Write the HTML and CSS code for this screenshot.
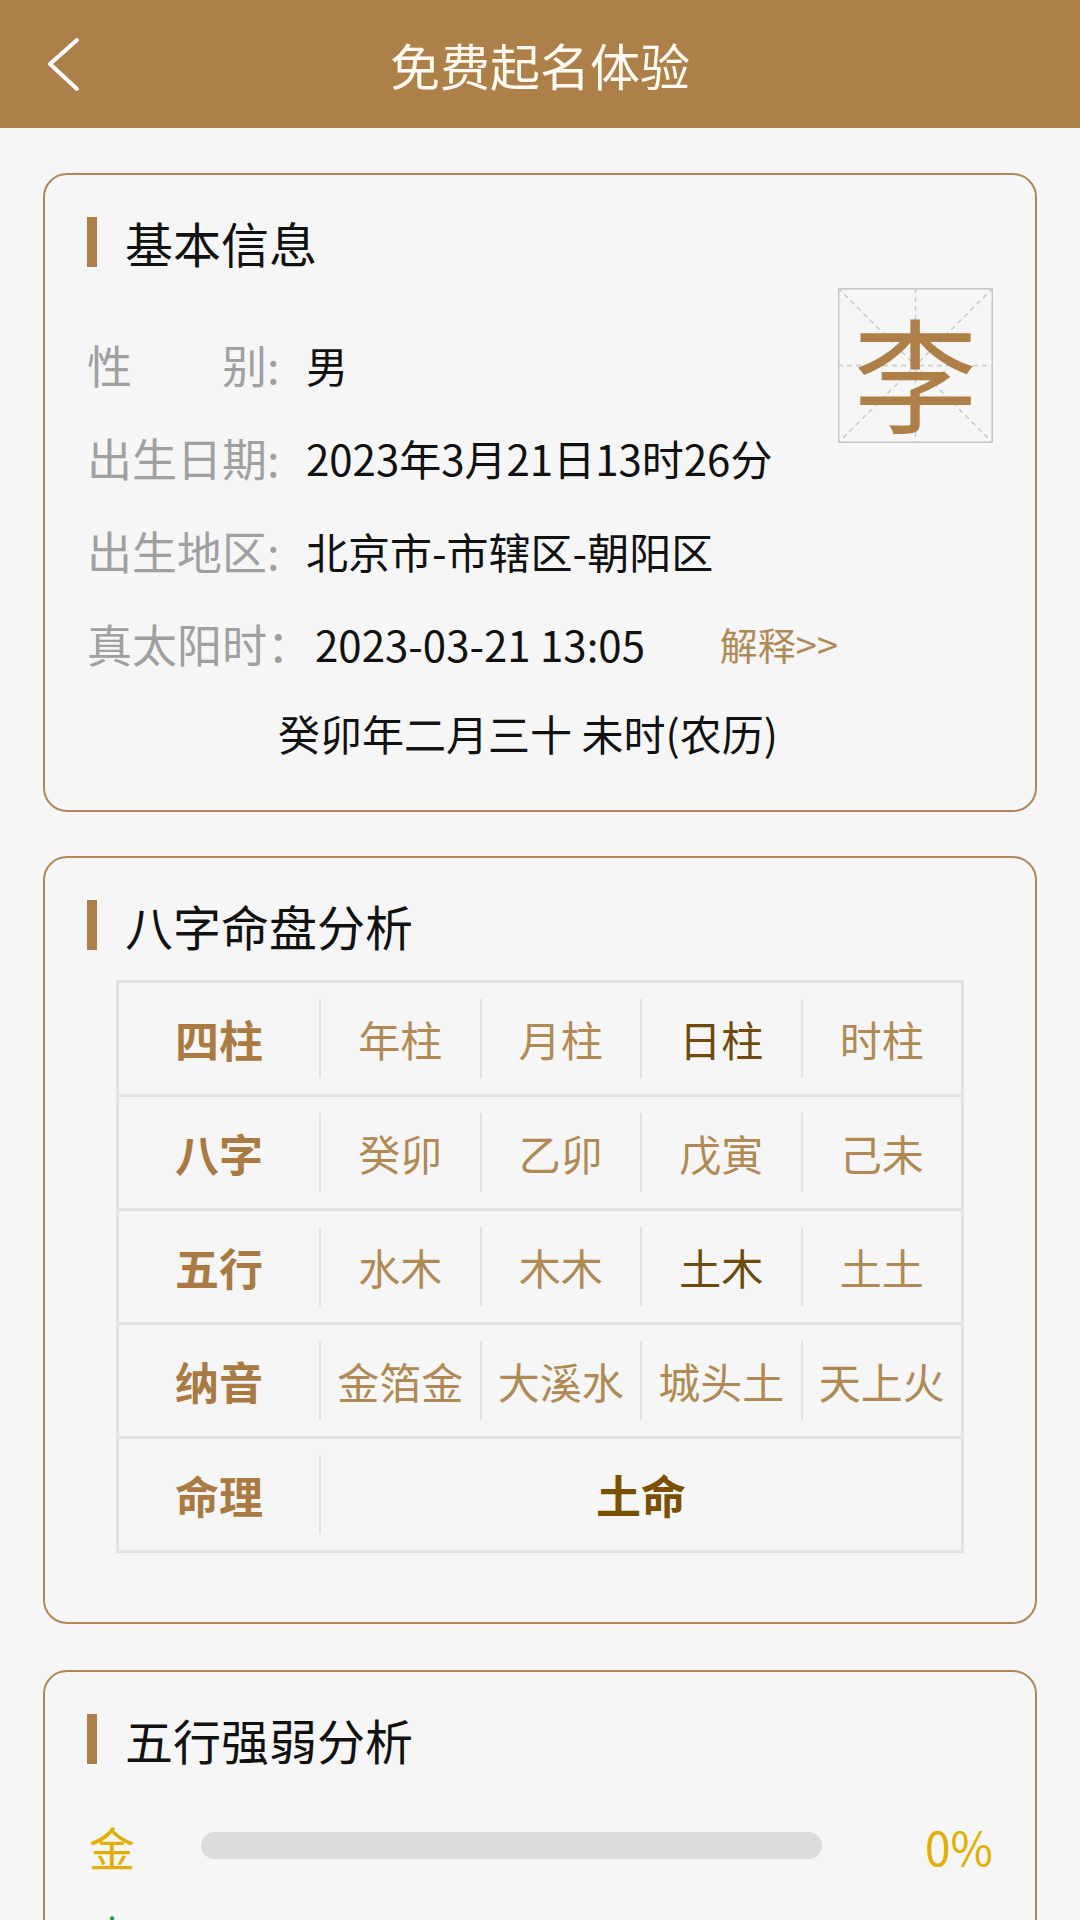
FILE: index.html
```html
<!DOCTYPE html>
<html lang="zh-CN">
<head>
<meta charset="utf-8">
<title>免费起名体验</title>
<link rel="stylesheet" href="styles.css">
</head>
<body>
<header class="topbar">
  <div class="back">
    <svg width="40" height="60" viewBox="0 0 40 60"><polyline points="33,6 6,30 33,55" fill="none" stroke="#ffffff" stroke-width="4" stroke-linecap="round" stroke-linejoin="round"/></svg>
  </div>
  <h1 class="title">免费起名体验</h1>
  <div></div>
</header>
<main class="page">
  <section class="card card-basic">
    <h2 class="sec-title"><span class="sec-bar"></span>基本信息</h2>
    <div class="basic-body">
      <div class="info">
        <div class="row"><span class="lbl"><span class="lbl-t just">性别</span>:</span><span class="val">男</span></div>
        <div class="row"><span class="lbl"><span class="lbl-t">出生日期</span>:</span><span class="val">2023年3月21日13时26分</span></div>
        <div class="row"><span class="lbl"><span class="lbl-t">出生地区</span>:</span><span class="val">北京市-市辖区-朝阳区</span></div>
        <div class="row"><span class="lbl-full">真太阳时：</span><span class="val">2023-03-21 13:05</span><span class="explain">解释&gt;&gt;</span></div>
      </div>
      <div class="namebox">
        <svg class="mi" width="155" height="155" viewBox="0 0 155 155">
          <rect x="0.75" y="0.75" width="153.5" height="153.5" fill="none" stroke="#c6c6c6" stroke-width="1.5"/>
          <g stroke="#cacaca" stroke-width="1.5" stroke-dasharray="5 4" fill="none">
            <line x1="77.5" y1="0" x2="77.5" y2="155"/>
            <line x1="0" y1="77.5" x2="155" y2="77.5"/>
            <line x1="0" y1="0" x2="155" y2="155"/>
            <line x1="155" y1="0" x2="0" y2="155"/>
          </g>
        </svg>
        <span class="surname">李</span>
      </div>
    </div>
    <p class="lunar">癸卯年二月三十 未时(农历)</p>
  </section>

  <section class="card card-bazi">
    <h2 class="sec-title"><span class="sec-bar"></span>八字命盘分析</h2>
    <div class="bz">
      <div class="bz-row"><div class="c head">四柱</div><div class="c">年柱</div><div class="c">月柱</div><div class="c dark">日柱</div><div class="c">时柱</div></div>
      <div class="bz-row"><div class="c head">八字</div><div class="c">癸卯</div><div class="c">乙卯</div><div class="c">戊寅</div><div class="c">己未</div></div>
      <div class="bz-row"><div class="c head">五行</div><div class="c">水木</div><div class="c">木木</div><div class="c dark">土木</div><div class="c">土土</div></div>
      <div class="bz-row"><div class="c head">纳音</div><div class="c">金箔金</div><div class="c">大溪水</div><div class="c">城头土</div><div class="c">天上火</div></div>
      <div class="bz-row"><div class="c head">命理</div><div class="c span4 ming">土命</div></div>
    </div>
  </section>

  <section class="card card-wx">
    <h2 class="sec-title"><span class="sec-bar"></span>五行强弱分析</h2>
    <div class="wx-list">
      <div class="wx-row jin"><span class="wx-l">金</span><div class="track"><div class="fill" style="width:0%"></div></div><span class="pct">0%</span></div>
      <div class="wx-row mu"><span class="wx-l">木</span><div class="track"><div class="fill" style="width:44.5%"></div></div><span class="pct">17%</span></div>
      <div class="wx-row shui"><span class="wx-l">水</span><div class="track"><div class="fill" style="width:10%"></div></div><span class="pct">4%</span></div>
      <div class="wx-row huo"><span class="wx-l">火</span><div class="track"><div class="fill" style="width:20%"></div></div><span class="pct">8%</span></div>
      <div class="wx-row tu"><span class="wx-l">土</span><div class="track"><div class="fill" style="width:60%"></div></div><span class="pct">71%</span></div>
    </div>
  </section>
</main>
</body>
</html>
```

FILE: styles.css
```css
* { box-sizing: border-box; }
html, body { margin: 0; padding: 0; }
body {
  background: #f6f6f6;
  font-family: "Noto Sans CJK SC", "Noto Sans", sans-serif;
  color: #111;
  width: 1080px;
}

.topbar {
  height: 128px;
  background: #ad8049;
  display: grid;
  grid-template-columns: 200px 1fr 200px;
  align-items: center;
}
.back {
  padding-left: 44px;
  display: flex;
  align-items: center;
}
.back svg { display: block; }
.title {
  margin: 0;
  text-align: center;
  color: #fffaf2;
  font-size: 50px;
  font-weight: 400;
  line-height: 1;
}

.page {
  padding: 45px 43px 0;
  display: flex;
  flex-direction: column;
  gap: 44px;
}

.card {
  border: 2px solid #b08758;
  border-radius: 24px;
  padding: 42px 42px 34px;
  background: #f6f6f6;
}

.sec-title {
  margin: 0;
  height: 50px;
  display: flex;
  align-items: center;
  font-size: 48px;
  font-weight: 400;
  color: #111;
  line-height: 1;
}
.sec-bar {
  width: 10px;
  height: 50px;
  background: #ad8049;
  margin-right: 28px;
  flex-shrink: 0;
}

/* basic info */
.basic-body {
  margin-top: 21px;
  display: flex;
  align-items: flex-start;
}
.info {
  flex: 1;
  padding-top: 30px;
}
.row {
  height: 93px;
  display: flex;
  align-items: center;
  font-size: 45px;
  white-space: nowrap;
}
.lbl {
  width: 219px;
  flex-shrink: 0;
  display: flex;
  color: #a0a0a0;
}
.lbl-t { display: inline-block; }
.lbl-t.just {
  width: 180px;
  text-align: justify;
  text-align-last: justify;
}
.lbl-full {
  color: #a0a0a0;
  margin-right: 3px;
}
.val {
  color: #111;
  font-size: 42px;
}
.explain {
  margin-left: auto;
  font-size: 38px;
  color: #b08a55;
}

.namebox {
  width: 155px;
  height: 155px;
  flex-shrink: 0;
  display: grid;
}
.namebox > * { grid-area: 1 / 1; }
.mi { display: block; }
.surname {
  display: flex;
  align-items: center;
  justify-content: center;
  font-size: 124px;
  line-height: 1;
  color: #ae8048;
  padding-top: 8px;
}

.lunar {
  margin: 0;
  height: 86px;
  line-height: 86px;
  text-align: center;
  font-size: 42px;
  padding-right: 24px;
  color: #111;
}

/* bazi table */
.card-bazi { padding-bottom: 69px; }
.bz {
  margin: 30px 29px 0;
  border: 3px solid #e3e3e3;
}
.bz-row {
  display: grid;
  grid-template-columns: 200px repeat(4, 1fr);
  padding: 16px 0;
}
.bz-row + .bz-row { border-top: 3px solid #e3e3e3; }
.c {
  height: 79px;
  display: flex;
  align-items: center;
  justify-content: center;
  font-size: 42px;
  color: #b08a55;
  white-space: nowrap;
}
.c + .c { border-left: 2px solid #e2e2e2; }
.c.head {
  font-weight: 700;
  color: #a97a42;
  font-size: 44px;
}
.c.dark { color: #6e4a0c; }
.c.span4 { grid-column: span 4; }
.c.ming {
  font-weight: 700;
  color: #7a5000;
  font-size: 45px;
}

/* wuxing */
.card-wx { margin-top: 2px; }
.wx-list { margin-top: 37px; }
.wx-row {
  height: 89px;
  display: grid;
  grid-template-columns: 114px 621px 1fr;
  align-items: center;
  font-size: 46px;
}
.wx-l { padding-left: 2px; }
.track {
  height: 27px;
  border-radius: 14px;
  background: #dcdcdc;
  overflow: hidden;
}
.fill {
  height: 100%;
  border-radius: 14px;
}
.pct { text-align: right; }
.jin { color: #e2ae00; }
.jin .fill { background: #f3dc8a; }
.mu { color: #1a9c3a; }
.mu .fill { background: #c9f4cc; }
.shui { color: #2a7fd4; }
.shui .fill { background: #c6def7; }
.huo { color: #e0452b; }
.huo .fill { background: #f7cdc4; }
.tu { color: #a0692a; }
.tu .fill { background: #ead6bd; }
```
